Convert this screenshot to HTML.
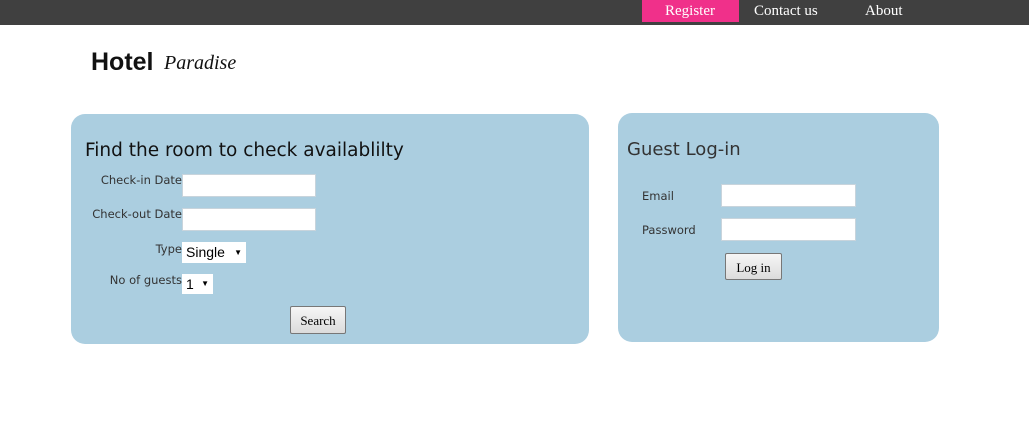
<!DOCTYPE html>
<html><head><style>
body{margin:0;width:1029px;height:430px;background:#fff;position:relative;overflow:hidden;font-family:"DejaVu Sans","Liberation Sans",sans-serif}
.a{position:absolute}
.nav{left:0;top:0;width:1029px;height:25px;background:#404040}
.nl{font-family:"Liberation Serif",serif;font-size:15px;color:#fff;top:3px}
.box{background:#abcee0;border-radius:14px}
.lbl{font-size:11.5px;color:#333;text-align:right}
.in{background:#fff;border:1px solid #c8d4dc;box-sizing:border-box}
.sel{background:#fff;font-family:"Liberation Sans",sans-serif;font-size:14px;color:#000;box-sizing:border-box;padding-left:4px;line-height:21px}
.btn{background:linear-gradient(#f6f6f6,#dcdcdc);border:1px solid #777;border-radius:2px;font-family:"Liberation Serif",serif;font-size:13px;text-align:center;box-sizing:border-box}
</style></head><body>
<div class="a nav"></div>
<div class="a" style="left:642px;top:0;width:97px;height:22px;background:#f0308a"></div>
<div class="a nl" style="left:665px">Register</div>
<div class="a nl" style="left:754px">Contact us</div>
<div class="a nl" style="left:865px">About</div>
<div class="a" style="left:91px;top:48px;font-family:'Liberation Sans',sans-serif;font-weight:bold;font-size:25px;color:#111">Hotel</div>
<div class="a" style="left:164px;top:52px;font-family:'Liberation Serif',serif;font-style:italic;font-size:20px;color:#111">Paradise</div>

<div class="a box" style="left:71px;top:114px;width:518px;height:230px"></div>
<div class="a" style="left:85px;top:140px;font-size:18.5px;color:#111">Find the room to check availablilty</div>
<div class="a lbl" style="left:80px;top:173px;width:102px">Check-in Date</div>
<div class="a in" style="left:182px;top:174px;width:134px;height:23px"></div>
<div class="a lbl" style="left:80px;top:207px;width:102px">Check-out Date</div>
<div class="a in" style="left:182px;top:208px;width:134px;height:23px"></div>
<div class="a lbl" style="left:80px;top:242px;width:102px">Type</div>
<div class="a sel" style="left:182px;top:242px;width:64px;height:21px">Single<span style="position:absolute;right:4px;font-size:8px">▼</span></div>
<div class="a lbl" style="left:80px;top:273px;width:102px">No of guests</div>
<div class="a sel" style="left:182px;top:274px;width:31px;height:20px;line-height:20px">1<span style="position:absolute;right:4px;font-size:8px">▼</span></div>
<div class="a btn" style="left:290px;top:306px;width:56px;height:28px;line-height:28px">Search</div>

<div class="a box" style="left:618px;top:113px;width:321px;height:229px"></div>
<div class="a" style="left:627px;top:139px;font-size:18px;color:#333">Guest Log-in</div>
<div class="a lbl" style="left:642px;top:189px;text-align:left">Email</div>
<div class="a in" style="left:721px;top:184px;width:135px;height:23px"></div>
<div class="a lbl" style="left:642px;top:223px;text-align:left">Password</div>
<div class="a in" style="left:721px;top:218px;width:135px;height:23px"></div>
<div class="a btn" style="left:725px;top:253px;width:57px;height:27px;line-height:27px">Log in</div>
</body></html>
